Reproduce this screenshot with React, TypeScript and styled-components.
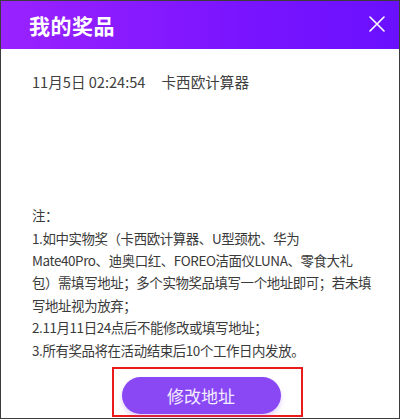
import React, { FC } from 'react';
import styled, { createGlobalStyle } from 'styled-components';

//region styled

const GlobalStyle = createGlobalStyle`
  html, body {
    margin: 0;
    padding: 0;
    background: #ffffff;
  }
  * {
    box-sizing: border-box;
  }
`;

const Card = styled.div`
  width: 400px;
  height: 419px;
  border: 1px solid #3c3c3c;
  display: flex;
  flex-direction: column;
  background: #ffffff;
  font-family: 'Noto Sans CJK SC', 'Noto Sans', sans-serif;
  overflow: hidden;
`;

const Header = styled.div`
  height: 48px;
  flex-shrink: 0;
  display: flex;
  align-items: center;
  justify-content: space-between;
  padding: 0 13px 0 28px;
  background: linear-gradient(90deg, #9a22ff 0%, #7a14ff 60%, #6a10ff 100%);
`;

const Title = styled.h1`
  margin: 0;
  font-size: 21px;
  font-weight: 700;
  line-height: 1;
  color: #ffffff;
  letter-spacing: 0.5px;
`;

const CloseButton = styled.button`
  width: 18px;
  height: 18px;
  padding: 0;
  border: none;
  background: none;
  display: flex;
  align-items: center;
  justify-content: center;
  cursor: pointer;
  margin-top: -2px;
`;

const Body = styled.div`
  flex: 1;
  display: flex;
  flex-direction: column;
  padding: 22px 0 0 31px;
`;

const RecordList = styled.div`
  flex: 1;
`;

const Record = styled.div`
  display: flex;
  gap: 16px;
  font-size: 14.6px;
  line-height: 22px;
  color: #404040;
`;

const Notes = styled.div`
  width: 340px;
  font-size: 13.45px;
  line-height: 22.4px;
  letter-spacing: -0.4px;
  text-spacing-trim: space-all;
  color: #3a3a3a;
`;

const NoteLine = styled.p`
  margin: 0;
`;

const Footer = styled.div`
  flex-shrink: 0;
  display: flex;
  justify-content: center;
  padding: 6px 0 1px 14px;
`;

const Highlight = styled.div`
  border: 2px solid #ec1b1b;
  padding: 8px 20px 1px 8px;
`;

const ActionButton = styled.button`
  width: 159px;
  height: 37px;
  border: none;
  border-radius: 19px;
  background: #8a48f4;
  box-shadow: 0 3px 5px rgba(138, 72, 244, 0.25);
  color: #f4eeff;
  font-family: 'Noto Sans CJK SC', sans-serif;
  font-size: 17px;
  line-height: 1;
  cursor: pointer;
`;

//endregion

interface Prize {
  time: string;
  name: string;
}

const prizes: Prize[] = [{ time: '11月5日 02:24:54', name: '卡西欧计算器' }];

const notes: string[] = [
  '注：',
  '1.如中实物奖（卡西欧计算器、U型颈枕、华为Mate40Pro、迪奥口红、FOREO洁面仪LUNA、零食大礼包）需填写地址；多个实物奖品填写一个地址即可；若未填写地址视为放弃；',
  '2.11月11日24点后不能修改或填写地址；',
  '3.所有奖品将在活动结束后10个工作日内发放。',
];

const App: FC = () => {
  return (
    <>
      <GlobalStyle />
      <Card>
        <Header>
          <Title>我的奖品</Title>
          <CloseButton aria-label="关闭">
            <svg width="16" height="16" viewBox="0 0 16 16">
              <path d="M1 1L15 15M15 1L1 15" stroke="#ffffff" strokeWidth="1.6" strokeLinecap="round" />
            </svg>
          </CloseButton>
        </Header>

        <Body>
          <RecordList>
            {prizes.map((item) => (
              <Record key={item.time}>
                <span>{item.time}</span>
                <span>{item.name}</span>
              </Record>
            ))}
          </RecordList>

          <Notes>
            {notes.map((line) => (
              <NoteLine key={line}>{line}</NoteLine>
            ))}
          </Notes>
        </Body>

        <Footer>
          <Highlight>
            <ActionButton>修改地址</ActionButton>
          </Highlight>
        </Footer>
      </Card>
    </>
  );
};

export default App;
